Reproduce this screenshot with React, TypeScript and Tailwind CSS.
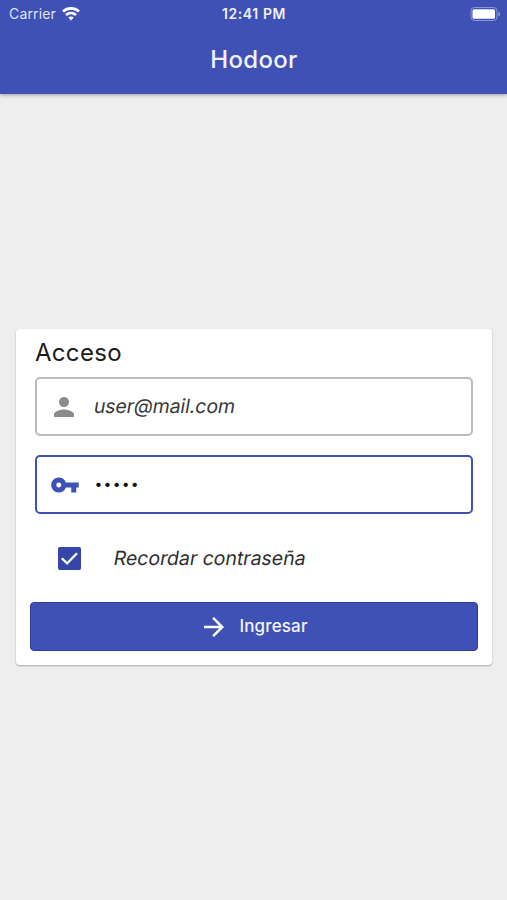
import React, { useState } from "react";
import { MdArrowForward, MdPerson, MdVpnKey } from "react-icons/md";

function StatusBar() {
  return (
    <div className="relative flex h-[27px] items-center justify-between pl-[9px] pr-[6px]">
      <div className="flex items-center gap-[6px]">
        <span className="text-[14px] leading-none tracking-[0.15px] text-[#dfe3f8]">Carrier</span>
        <svg width="18" height="14" viewBox="0 0 18 14" fill="none" stroke="#fff" strokeWidth="2.7">
          <path d="M1 4.500C5.500.4 12.500.4 17 4.500" />
          <path d="M4 8.100c2.900-2.700 7.100-2.700 10 0" />
          <path d="M6.300 10.600c1.500-1.500 3.900-1.500 5.400 0L9 13.400z" fill="#fff" stroke="none" />
        </svg>
      </div>
      <span className="absolute inset-x-0 pl-[1px] text-center text-[14px] font-semibold leading-none tracking-[0.6px] text-[#eef0fc]">
        12:41 PM
      </span>
      <svg width="31" height="14" viewBox="0 0 31 14">
        <rect x="1" y="0.5" width="26" height="13" rx="3.500" fill="none" stroke="#fff" strokeOpacity="0.4" />
        <rect x="2.500" y="2.200" width="22.500" height="9.600" rx="1.500" fill="#fff" />
        <path d="M28.500 4.700c2 .8 2 3.800 0 4.600z" fill="#fff" fillOpacity="0.5" />
      </svg>
    </div>
  );
}

export default function App() {
  const [email, setEmail] = useState("user@mail.com");
  const [password, setPassword] = useState("12345");
  const [remember, setRemember] = useState(true);

  return (
    <div className="flex h-[900px] w-[507px] flex-col bg-[#eeeeee] font-['Inter',sans-serif]">
      {/* Header */}
      <header className="h-[94px] shrink-0 bg-[#3f51b5] shadow-[0_1px_4px_rgba(0,0,0,0.35)]">
        <StatusBar />
        <h1 className="pl-[1px] pt-[15px] text-center text-[24px] font-medium leading-[36px] tracking-[0.3px] text-[#f0f2ff]">
          Hodoor
        </h1>
      </header>

      {/* Login card */}
      <main className="pl-[16px] pr-[15px] pt-[235px]">
        <form
          className="flex h-[336px] flex-col rounded-[4px] bg-white px-[14px] pt-[6px] shadow-[0_1px_2px_rgba(0,0,0,0.3)]"
          onSubmit={(e) => e.preventDefault()}
        >
          <h2 className="px-[5px] text-[24px] leading-[36px] tracking-[0.3px] text-[#1c1c1c]">Acceso</h2>

          <label className="mx-[5px] mt-[6px] flex h-[59px] shrink-0 items-center rounded-[5px] border-2 border-[#bcbcbc] pl-[12px]">
            <MdPerson size={30} className="shrink-0 text-[#8b8b8b]" />
            <input
              value={email}
              onChange={(e) => setEmail(e.target.value)}
              className="ml-[14.500px] w-[340px] -skew-x-[10deg] text-[19.500px] tracking-[-0.1px] text-[#383838] outline-none"
            />
          </label>

          <label className="mx-[5px] mt-[19px] flex h-[59px] shrink-0 items-center rounded-[5px] border-[2.500px] border-[#3f51b5] pl-[12.500px]">
            <MdVpnKey size={30} className="shrink-0 text-[#3f51b5]" />
            <input
              type="password"
              value={password}
              onChange={(e) => setPassword(e.target.value)}
              className="ml-[15px] w-[340px] pb-[2px] text-[14px] tracking-[1.200px] text-[#111111] outline-none"
            />
          </label>

          <label className="mt-[20px] flex h-[48px] shrink-0 items-center pl-[28px]">
            <input type="checkbox" checked={remember} onChange={(e) => setRemember(e.target.checked)} className="sr-only" />
            <svg width="23" height="23" viewBox="0 0 23 23">
              <rect x="0.500" y="0.500" width="22" height="22" rx="1" fill={remember ? "#3546a8" : "#fff"} stroke="#3546a8" />
              {remember && <path d="M3.800 11.200l5.300 5.200L19 6.200" fill="none" stroke="#fff" strokeWidth="2.300" />}
            </svg>
            <span className="ml-[32.500px] -skew-x-[10deg] pt-[1px] text-[19.500px] tracking-[-0.03px] text-[#303030]">
              Recordar contraseña
            </span>
          </label>

          <button className="mt-[20px] flex h-[49px] shrink-0 items-center justify-center rounded-[4px] border border-[#303f9f] bg-[#3f51b5] pr-[1px]">
            <MdArrowForward size={30} className="text-white" />
            <span className="ml-[10px] text-[17px] font-medium tracking-[0.15px] text-[#f2f4ff]">Ingresar</span>
          </button>
        </form>
      </main>
    </div>
  );
}
